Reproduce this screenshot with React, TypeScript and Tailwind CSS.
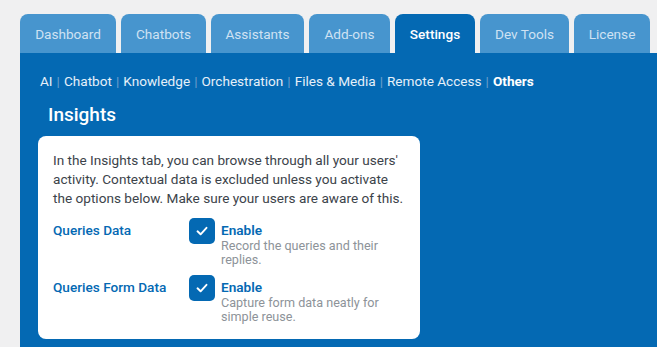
import React from "react";

const tabs = [
  { label: "Dashboard", w: 96 },
  { label: "Chatbots", w: 85 },
  { label: "Assistants", w: 93 },
  { label: "Add-ons", w: 81 },
  { label: "Settings", w: 80, active: true },
  { label: "Dev Tools", w: 89 },
  { label: "License", w: 76 },
];

const subs = ["AI", "Chatbot", "Knowledge", "Orchestration", "Files & Media", "Remote Access"];

function Check() {
  return (
    <div className="w-[26px] h-[26px] rounded-[5px] bg-[#0469b3] flex items-center justify-center shrink-0">
      <svg width="14" height="14" viewBox="0 0 14 14" fill="none">
        <path d="M2.5 7.3 L5.6 10.3 L11.5 3.8" stroke="white" strokeWidth="1.9" strokeLinecap="round" strokeLinejoin="round" />
      </svg>
    </div>
  );
}

function Row({ label, desc }: { label: string; desc: string }) {
  return (
    <div className="flex">
      <div className="w-[136px] text-[13.6px] font-medium text-[#0469b3] pt-[3px] leading-[18px]">{label}</div>
      <Check />
      <div className="ml-[6px] w-[180px]">
        <div className="text-[13.6px] font-semibold text-[#0469b3] leading-[18px] pt-[3px]">Enable</div>
        <div className="text-[12.6px] text-[#8d9399] leading-[14px]">{desc}</div>
      </div>
    </div>
  );
}

export default function App() {
  return (
    <div
      className="w-[657px] h-[347px] bg-[#f0f0f1] pl-[20px] pt-[14px] flex flex-col overflow-hidden"
      style={{ fontFamily: "Roboto, 'Liberation Sans', sans-serif" }}
    >
      <div className="flex gap-[5px] h-[39px]">
        {tabs.map((t) => (
          <div
            key={t.label}
            className={
              "h-[39px] rounded-t-[8px] flex items-center justify-center text-[13.6px] pt-[1px] " +
              (t.active ? "bg-[#0469b3] text-white font-medium" : "bg-[#4795ce] text-[#cfe2f3]")
            }
            style={{ width: t.w }}
          >
            {t.label}
          </div>
        ))}
      </div>
      <div className="flex-1 bg-[#0469b3] pl-[18px]">
        <div className="pl-[2px] pt-[19px] text-[13.6px] text-[#e6f0f9] leading-[18px] flex items-center">
          {subs.map((s) => (
            <React.Fragment key={s}>
              <span>{s}</span>
              <span className="text-[#6d9fcc] mx-[4px]">|</span>
            </React.Fragment>
          ))}
          <span className="font-bold text-white">Others</span>
        </div>
        <div className="pl-[10px] mt-[13px] text-[19px] font-medium text-white leading-[24px]">Insights</div>
        <div className="mt-[9px] w-[382px] bg-white rounded-[8px] px-[15px] pt-[15px] pb-[15px]">
          <p className="text-[13.6px] leading-[19px] text-[#3c434a]">
            In the Insights tab, you can browse through all your users' activity. Contextual data is excluded unless you activate the options below. Make sure your users are aware of this.
          </p>
          <div className="mt-[10px] flex flex-col gap-[8px]">
            <Row label="Queries Data" desc="Record the queries and their replies." />
            <Row label="Queries Form Data" desc="Capture form data neatly for simple reuse." />
          </div>
        </div>
      </div>
    </div>
  );
}
